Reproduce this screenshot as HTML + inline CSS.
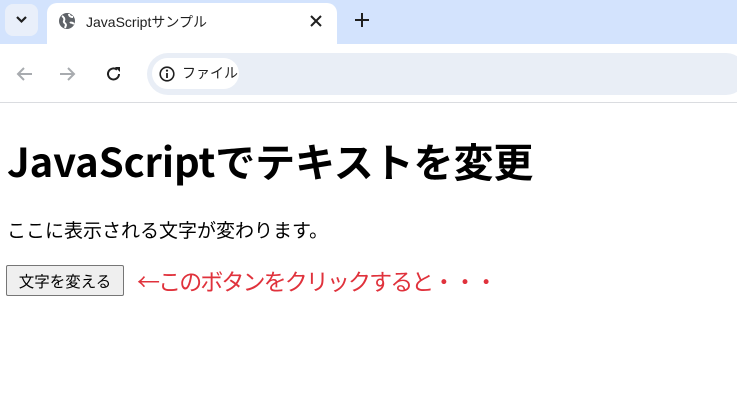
<!DOCTYPE html>
<html><head><meta charset="utf-8"><style>
*{margin:0;padding:0;box-sizing:border-box}
body{width:737px;height:417px;overflow:hidden;background:#fff;font-family:"Liberation Sans","Noto Sans CJK JP",sans-serif;position:relative}
.tabbar{position:absolute;left:0;top:0;width:737px;height:44px;background:#d3e3fd}
.dd{position:absolute;left:5px;top:4px;width:33px;height:32px;background:#e9effa;border-radius:8px}
.tab{position:absolute;left:47px;top:3px;width:290px;height:42px;background:#fff;border-radius:10px 10px 0 0}
.tab span{position:absolute;left:39px;top:9px;font-size:14px;color:#1f1f1f;white-space:nowrap}
.toolbar{position:absolute;left:0;top:44px;width:737px;height:59px;background:#fff;border-bottom:1px solid #dadce0}
.addr{position:absolute;left:147px;top:9px;width:600px;height:42px;background:#e9eef6;border-radius:21px}
.chip{position:absolute;left:5px;top:5px;width:87px;height:31px;background:#fff;border-radius:16px}
.chip span{position:absolute;left:30px;top:6px;font-size:14px;color:#1f1f1f;white-space:nowrap;font-family:"Noto Sans CJK JP",sans-serif;line-height:18px}
h1{position:absolute;left:7px;top:134px;font-size:40px;font-weight:bold;color:#000;white-space:nowrap;font-family:"Noto Sans CJK JP","Liberation Sans",sans-serif;line-height:52px;letter-spacing:-0.1px}
p{position:absolute;left:7px;top:218px;font-size:19px;white-space:nowrap;line-height:28px}
button{position:absolute;left:6px;top:265px;width:118px;height:31px;font-size:15.5px;background:#efefef;border:1px solid #767676;border-radius:2px;font-family:"Liberation Sans","Noto Sans CJK JP",sans-serif}
.red{position:absolute;left:137px;top:263px;font-size:23px;color:#e0323c;white-space:nowrap;line-height:34px;letter-spacing:-1.9px;font-family:"Noto Sans CJK JP",sans-serif}
</style></head><body>
<div class="tabbar">
<div class="dd"><svg width="33" height="32"><path d="M12 13l4.5 4.5L21 13" stroke="#1f1f1f" stroke-width="2.2" fill="none"/></svg></div>
<div class="tab">
<svg style="position:absolute;left:11px;top:9px" width="18" height="18" viewBox="0 0 18 18"><circle cx="9" cy="9" r="8" fill="#5f6368"/><path d="M4 4c2 1 3 3 2 5s2 2 2 4l-1 3M11 2c0 2 2 3 4 3M12 11c1-1 3 0 4 1" stroke="#fff" stroke-width="2" fill="none"/></svg>
<span>JavaScriptサンプル</span>
<svg style="position:absolute;left:263px;top:12px" width="12" height="12"><path d="M1 1l10 10M11 1L1 11" stroke="#1f1f1f" stroke-width="2"/></svg>
</div>
<svg style="position:absolute;left:354px;top:12px" width="16" height="16"><path d="M8 1v14M1 8h14" stroke="#1f1f1f" stroke-width="2"/></svg>
</div>
<div class="toolbar">
<svg style="position:absolute;left:15px;top:22px" width="18" height="16"><path d="M17 8H3M9 2L3 8l6 6" stroke="#a8abaf" stroke-width="2" fill="none"/></svg>
<svg style="position:absolute;left:59px;top:22px" width="18" height="16"><path d="M1 8h14M9 2l6 6-6 6" stroke="#a8abaf" stroke-width="2" fill="none"/></svg>
<svg style="position:absolute;left:105px;top:21px" width="18" height="18" viewBox="0 0 18 18"><path d="M14 9a5.5 5.5 0 1 1-2-4.3" stroke="#1f1f1f" stroke-width="2" fill="none"/><path d="M10 2h5v5z" fill="#1f1f1f"/></svg>
<div class="addr"><div class="chip">
<svg style="position:absolute;left:7px;top:8px" width="16" height="16"><circle cx="8" cy="8" r="6.8" stroke="#1f1f1f" stroke-width="1.6" fill="none"/><path d="M8 7v5" stroke="#1f1f1f" stroke-width="1.8"/><circle cx="8" cy="4.6" r="1.1" fill="#1f1f1f"/></svg>
<span>ファイル</span></div></div>
</div>
<h1>JavaScriptでテキストを変更</h1>
<p>ここに表示される文字が変わります。</p>
<button>文字を変える</button>
<div class="red">←このボタンをクリックすると・・・</div>
</body></html>
